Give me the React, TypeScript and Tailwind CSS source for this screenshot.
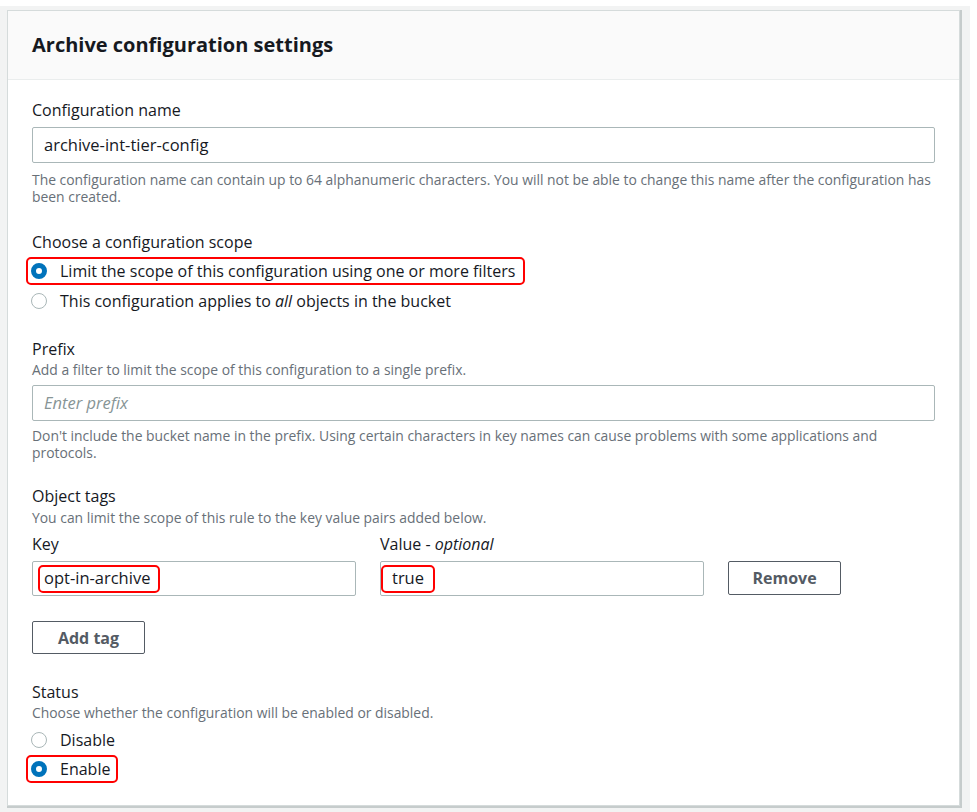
import React from 'react';

const font = { fontFamily: '"Open Sans", "Noto Sans", Arial, sans-serif' };

function Radio({ checked }: { checked?: boolean }) {
  return checked ? (
    <span className="inline-block h-[16px] w-[16px] shrink-0 rounded-full border-[5px] border-[#0073bb] bg-white" />
  ) : (
    <span className="-ml-[1px] inline-block h-[16px] w-[16px] shrink-0 rounded-full border border-[#aab7b8] bg-white" />
  );
}

const label = 'text-[16px] leading-[20px] text-[#16191f]';
const hint = 'text-[13.9px] leading-[18px] text-[#687078]';
const note = 'text-[13.9px] leading-[16.5px] text-[#687078]';
const button = 'rounded-[2px] border border-[#545b64] bg-white text-[16px] font-bold text-[#545b64]';

export default function App() {
  return (
    <div className="min-h-screen bg-white pt-[6px] pr-[7px]" style={font}>
      <div className="bg-[#f2f3f3] pl-[7px] pr-[10px] pt-[4px] pb-[7px]">
        <div className="border border-[#d5dbdb] bg-white shadow-[1px_1px_0_1px_#c6cccc]">
          {/* Header */}
          <div className="flex h-[69px] items-center border-b border-[#eaeded] bg-[#fafafa] px-[24px]">
            <h2 className="text-[20px] font-bold text-[#16191f]">Archive configuration settings</h2>
          </div>

          <div className="px-[24px] pt-[20px] pb-[22px]">
            {/* Name */}
            <div className={label}>Configuration name</div>
            <div className="mt-[7px] flex h-[36px] items-center rounded-[2px] border border-[#aab7b8] px-[11px] text-[16.5px] text-[#16191f]">
              archive-int-tier-config
            </div>
            <p className={`mt-[9px] ${note}`}>
              The configuration name can contain up to 64 alphanumeric characters. You will not be able to change this name after the configuration has been created.
            </p>

            {/* Scope */}
            <div className={`mt-[27px] ${label}`}>Choose a configuration scope</div>
            <div className="mt-[5px] -ml-[6px] inline-flex h-[28px] items-center gap-[13px] rounded-[5px] border-2 border-[#ff0000] pl-[3px] pr-[8px] text-[16px] text-[#16191f]">
              <Radio checked />
              <span>Limit the scope of this configuration using one or more filters</span>
            </div>
            <div className="mt-[2px] flex h-[28px] items-center gap-[13px] text-[16px] text-[#16191f]">
              <Radio />
              <span>
                This configuration applies to <i>all</i> objects in the bucket
              </span>
            </div>

            {/* Prefix */}
            <div className={`mt-[24px] ${label}`}>Prefix</div>
            <div className={`mt-[2px] ${hint}`}>Add a filter to limit the scope of this configuration to a single prefix.</div>
            <div className="mt-[6px] flex h-[36px] items-center rounded-[2px] border border-[#aab7b8] px-[11px] text-[16.5px] italic text-[#879596]">
              Enter prefix
            </div>
            <p className={`mt-[7px] ${note}`}>
              Don't include the bucket name in the prefix. Using certain characters in key names can cause problems with some applications and protocols.
            </p>

            {/* Tags */}
            <div className={`mt-[25px] ${label}`}>Object tags</div>
            <div className={`mt-[3px] ${hint}`}>You can limit the scope of this rule to the key value pairs added below.</div>
            <div className="mt-[7px] flex items-end gap-[24px]">
              <div className="w-[324px]">
                <div className={label}>Key</div>
                <div className="mt-[7px] flex h-[35px] items-center rounded-[2px] border border-[#aab7b8] pl-[5px] text-[16.5px] text-[#16191f]">
                  <span className="flex h-[28px] items-center rounded-[5px] border-2 border-[#ff0000] pl-[4px] pr-[8px]">opt-in-archive</span>
                </div>
              </div>
              <div className="w-[324px]">
                <div className={label}>
                  Value - <i>optional</i>
                </div>
                <div className="mt-[7px] flex h-[35px] items-center rounded-[2px] border border-[#aab7b8] text-[16.5px] text-[#16191f]">
                  <span className="flex h-[28px] items-center rounded-[5px] border-2 border-[#ff0000] pl-[9px] pr-[9px]">true</span>
                </div>
              </div>
              <button className={`mb-[1px] h-[34px] w-[113px] ${button}`}>Remove</button>
            </div>
            <button className={`mt-[25px] h-[33px] w-[113px] ${button}`}>Add tag</button>

            {/* Status */}
            <div className={`mt-[28px] ${label}`}>Status</div>
            <div className={`mt-[2px] ${hint}`}>Choose whether the configuration will be enabled or disabled.</div>
            <div className="mt-[4px] flex h-[28px] items-center gap-[13px] text-[16px] text-[#16191f]">
              <Radio />
              <span>Disable</span>
            </div>
            <div className="mt-[1px] -ml-[6px] inline-flex h-[28px] items-center gap-[13px] rounded-[5px] border-2 border-[#ff0000] pl-[3px] pr-[6px] text-[16px] text-[#16191f]">
              <Radio checked />
              <span>Enable</span>
            </div>
          </div>
        </div>
      </div>
    </div>
  );
}
